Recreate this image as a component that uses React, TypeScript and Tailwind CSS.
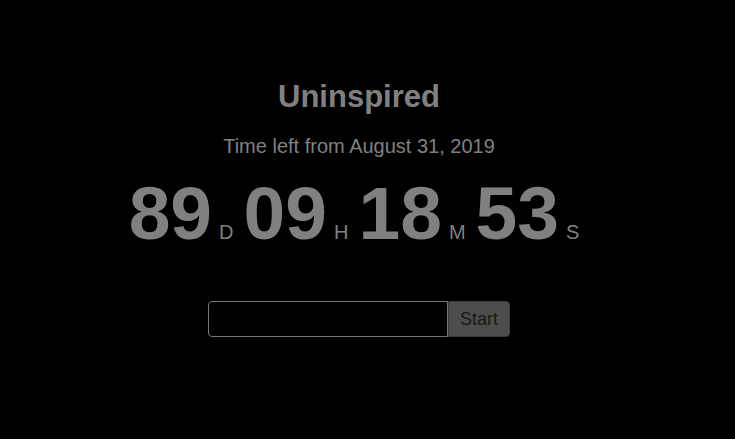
import React from 'react';

const units = [
  { value: '89', label: 'D' },
  { value: '09', label: 'H' },
  { value: '18', label: 'M' },
  { value: '53', label: 'S' },
];

export default function App() {
  return (
    <div className="min-h-screen bg-black pr-[17px] font-['Liberation_Sans',Arial,sans-serif] text-[#808080]">
      <div className="flex flex-col items-center pt-[78px]">
        <h1 className="text-[31px] font-bold leading-[37px]">Uninspired</h1>
        <p className="mt-[20px] text-[20px] leading-[23px]">Time left from August 31, 2019</p>

        <div className="mt-[12px] flex items-baseline">
          {units.map((u) => (
            <div key={u.label} className="flex items-baseline">
              <span className="text-[75px] font-bold leading-[86px]">{u.value}</span>
              <span className="ml-[7px] mr-[10px] text-[20px] leading-none">{u.label}</span>
            </div>
          ))}
        </div>

        <div className="mt-[45px] flex">
          <input
            type="text"
            className="h-[36px] w-[240px] rounded-l-[4px] border border-[#767676] bg-black px-2 text-[#808080] outline-none"
          />
          <div className="flex h-[36px] w-[62px] items-center justify-center rounded-r-[4px] border border-[#3c3c3c] bg-[#4d4d4d] text-[18px] text-neutral-900">
            Start
          </div>
        </div>
      </div>
    </div>
  );
}
